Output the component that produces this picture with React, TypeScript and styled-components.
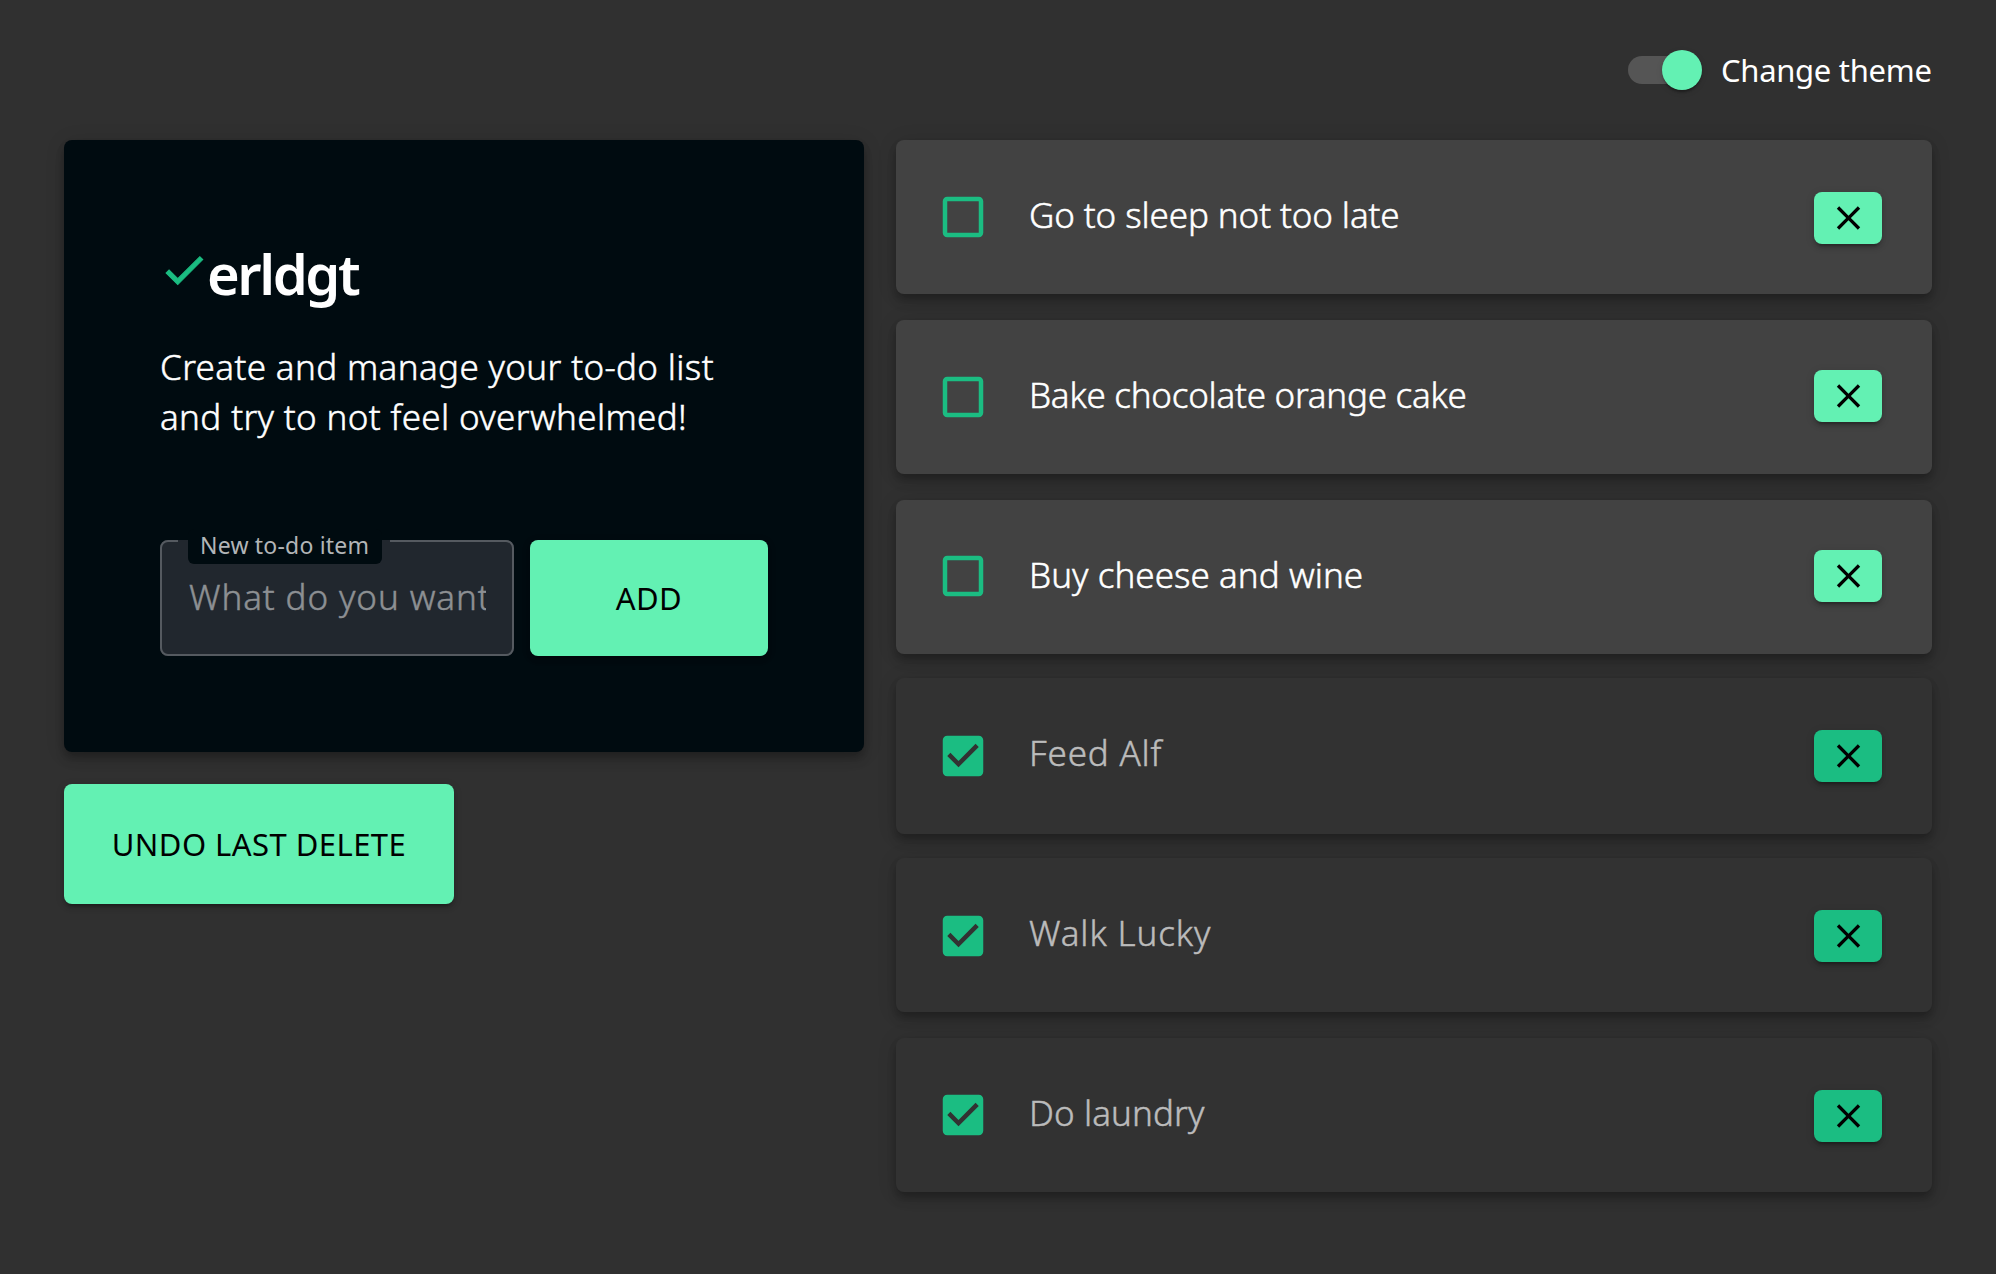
import React, { useState } from "react";
import styled, { createGlobalStyle, css } from "styled-components";

const colors = {
  page: "#303030",
  hero: "#000b10",
  paper: "#424242",
  paperDone: "#323232",
  mint: "#63f1b3",
  green: "#1bbd82",
};

const bodyFont = `"Noto Sans", "Open Sans", sans-serif`;

const elevation2 = css`
  box-shadow: 0 6px 2px -4px rgba(0, 0, 0, 0.2), 0 4px 4px 0 rgba(0, 0, 0, 0.14),
    0 2px 10px 0 rgba(0, 0, 0, 0.12);
`;

const elevation4 = css`
  box-shadow: 0 4px 8px -2px rgba(0, 0, 0, 0.2), 0 8px 10px 0 rgba(0, 0, 0, 0.14),
    0 2px 20px 0 rgba(0, 0, 0, 0.12);
`;

/* The light cut, thickened slightly so it sits between light and regular. */
const softLight = css`
  font-size: 35px;
  font-weight: 300;
  line-height: 50px;
  -webkit-text-stroke: 0.5px currentColor;
`;

const GlobalStyle = createGlobalStyle`
  *, *::before, *::after { box-sizing: border-box; }
  body {
    margin: 0;
    background: ${colors.page};
    color: #fff;
    font-family: ${bodyFont};
    -webkit-font-smoothing: antialiased;
  }
`;

const Page = styled.div`
  width: 1996px;
  min-height: 1274px;
  padding: 49px 64px 0;
`;

const Header = styled.header`
  display: flex;
  justify-content: flex-end;
  align-items: center;
  gap: 19px;
  height: 42px;
  margin-bottom: 49px;
`;

const SwitchTrack = styled.button<{ $on: boolean }>`
  display: flex;
  align-items: center;
  justify-content: ${(p) => (p.$on ? "flex-end" : "flex-start")};
  width: 68px;
  height: 28px;
  margin-right: 6px;
  padding: 0;
  border: 0;
  border-radius: 14px;
  background: #555;
`;

const SwitchThumb = styled.span`
  flex: none;
  width: 40px;
  height: 40px;
  margin-right: -6px;
  border-radius: 50%;
  background: ${colors.mint};
  box-shadow: 0 4px 2px -2px rgba(0, 0, 0, 0.2), 0 2px 2px 0 rgba(0, 0, 0, 0.14),
    0 2px 6px 0 rgba(0, 0, 0, 0.12);
`;

const SwitchLabel = styled.span`
  width: 211px;
  font-size: 31px;
  line-height: 42px;
  letter-spacing: -0.3px;
  white-space: nowrap;
`;

const Columns = styled.main`
  display: grid;
  grid-template-columns: 800px 1036px;
  column-gap: 32px;
  align-items: start;
`;

const Sidebar = styled.section`
  display: flex;
  flex-direction: column;
  align-items: flex-start;
  gap: 32px;
`;

const Hero = styled.div`
  width: 100%;
  height: 612px;
  padding: 96px;
  border-radius: 8px;
  background: ${colors.hero};
  ${elevation4}
`;

const Logo = styled.h1`
  display: flex;
  align-items: flex-start;
  height: 74px;
  margin: 0 0 32px;
  font-size: 56px;
  font-weight: 600;
  line-height: 74px;
  letter-spacing: -2.4px;
`;

const LogoCheck = styled.svg`
  flex: none;
  width: 50px;
  height: 50px;
  margin: 9px -2px 0 -1px;
  fill: ${colors.green};
  stroke: ${colors.green};
  stroke-width: 0.5;
`;

const Intro = styled.p`
  margin: 0 0 98px;
  ${softLight}
  letter-spacing: 0.36px;
  white-space: nowrap;
`;

const Form = styled.form`
  display: flex;
  gap: 16px;
  height: 116px;
`;

const Field = styled.div`
  position: relative;
  width: 354px;
  padding: 32px 26px 0 28px;
  border-radius: 8px;
  background: #21272e;
`;

const Outline = styled.fieldset`
  position: absolute;
  inset: -4px 0 0;
  min-width: 0;
  margin: 0;
  padding: 0 16px;
  border: 2px solid #555a60;
  border-radius: 8px;
  pointer-events: none;
`;

const Notch = styled.legend`
  width: 212px;
  height: 10px;
  padding: 0;
`;

const FieldLabel = styled.label`
  position: absolute;
  top: -11px;
  left: 28px;
  width: 194px;
  height: 35px;
  padding-left: 12px;
  border-radius: 6px;
  background: ${colors.hero};
  color: #b2b5b7;
  font-size: 23px;
  line-height: 32px;
  letter-spacing: 0.2px;
  white-space: nowrap;
`;

const TextInput = styled.input`
  display: block;
  width: 298px;
  height: 50px;
  padding: 0;
  border: 0;
  outline: 0;
  background: transparent;
  color: #fff;
  font-family: ${bodyFont};
  ${softLight}
  letter-spacing: 0.9px;
  text-indent: 1px;

  &::placeholder {
    color: #8d9093;
    opacity: 1;
  }
`;

const Button = styled.button<{ $width: number; $height: number }>`
  width: ${(p) => p.$width}px;
  height: ${(p) => p.$height}px;
  padding: 0;
  border: 0;
  border-radius: 8px;
  background: ${colors.mint};
  color: #000;
  font-family: ${bodyFont};
  font-size: 31px;
  letter-spacing: 0.45px;
  white-space: nowrap;
  ${elevation2}
`;

const List = styled.ul`
  display: flex;
  flex-direction: column;
  margin: 0;
  padding: 0;
  list-style: none;
`;

const Item = styled.li<{ $done: boolean; $height: number; $gap: number }>`
  display: flex;
  align-items: flex-start;
  height: ${(p) => p.$height}px;
  margin-bottom: ${(p) => p.$gap}px;
  padding: 0 50px 0 40px;
  border-radius: 8px;
  background: ${(p) => (p.$done ? colors.paperDone : colors.paper)};
  color: ${(p) => (p.$done ? "#bbb" : "#fff")};
  ${elevation4}
`;

const CheckboxIcon = styled.svg<{ $top: number }>`
  flex: none;
  width: 54px;
  height: 54px;
  margin-top: ${(p) => p.$top}px;
  fill: ${colors.green};
`;

const ItemText = styled.span<{ $tracking: number }>`
  flex: 1;
  margin: 50px 0 0 39px;
  ${softLight}
  letter-spacing: ${(p) => p.$tracking}px;
  white-space: nowrap;
`;

const DeleteButton = styled.button<{ $done: boolean; $top: number }>`
  display: flex;
  align-items: center;
  justify-content: flex-start;
  width: 68px;
  height: 52px;
  margin-top: ${(p) => p.$top}px;
  padding: 0 0 0 14px;
  border: 0;
  border-radius: 8px;
  background: ${(p) => (p.$done ? colors.green : colors.mint)};
  ${elevation2}

  svg {
    width: 41px;
    height: 40px;
    fill: #000;
  }
`;

const BOX_EMPTY =
  "M19 5v14H5V5h14m0-2H5c-1.1 0-2 .9-2 2v14c0 1.1.9 2 2 2h14c1.1 0 2-.9 2-2V5c0-1.1-.9-2-2-2z";
const BOX_CHECKED =
  "M19 3H5c-1.11 0-2 .9-2 2v14c0 1.1.89 2 2 2h14c1.11 0 2-.9 2-2V5c0-1.1-.89-2-2-2zm-9 14l-5-5 1.41-1.41L10 14.17l7.59-7.59L19 8l-9 9z";
const CROSS =
  "M19 6.41L17.59 5 12 10.59 6.41 5 5 6.41 10.59 12 5 17.59 6.41 19 12 13.41 17.59 19 19 17.59 13.41 12z";
const CHECK = "M9 16.17L4.83 12l-1.42 1.41L9 19 21 7l-1.41-1.41z";

type Todo = {
  text: string;
  done: boolean;
  height: number;
  gap: number;
  boxTop: number;
  deleteTop: number;
  tracking: number;
};

const todos: Todo[] = [
  { text: "Go to sleep not too late", done: false, height: 154, gap: 26, boxTop: 50, deleteTop: 52, tracking: -0.1 },
  { text: "Bake chocolate orange cake", done: false, height: 154, gap: 26, boxTop: 50, deleteTop: 50, tracking: -0.25 },
  { text: "Buy cheese and wine", done: false, height: 154, gap: 24, boxTop: 49, deleteTop: 50, tracking: 0.05 },
  { text: "Feed Alf", done: true, height: 156, gap: 24, boxTop: 51, deleteTop: 52, tracking: 0.8 },
  { text: "Walk Lucky", done: true, height: 154, gap: 26, boxTop: 51, deleteTop: 52, tracking: 0.9 },
  { text: "Do laundry", done: true, height: 154, gap: 0, boxTop: 50, deleteTop: 52, tracking: 0.1 },
];

export default function App() {
  const [on, setOn] = useState(true);
  return (
    <>
      <GlobalStyle />
      <Page>
        <Header>
          <SwitchTrack type="button" role="switch" aria-checked={on} $on={on} onClick={() => setOn(!on)}>
            <SwitchThumb />
          </SwitchTrack>
          <SwitchLabel>Change theme</SwitchLabel>
        </Header>
        <Columns>
          <Sidebar>
            <Hero>
              <Logo>
                <LogoCheck viewBox="0 0 24 24">
                  <path d={CHECK} />
                </LogoCheck>
                erldgt
              </Logo>
              <Intro>
                Create and manage your to-do list
                <br />
                and try to not feel overwhelmed!
              </Intro>
              <Form onSubmit={(e) => e.preventDefault()}>
                <Field>
                  <Outline aria-hidden="true">
                    <Notch />
                  </Outline>
                  <FieldLabel htmlFor="new-todo">New to-do item</FieldLabel>
                  <TextInput id="new-todo" placeholder="What do you want to do?" />
                </Field>
                <Button $width={238} $height={116}>ADD</Button>
              </Form>
            </Hero>
            <Button type="button" $width={390} $height={120}>UNDO LAST DELETE</Button>
          </Sidebar>
          <List>
            {todos.map((t) => (
              <Item key={t.text} $done={t.done} $height={t.height} $gap={t.gap}>
                <CheckboxIcon $top={t.boxTop} viewBox="0 0 24 24">
                  <path d={t.done ? BOX_CHECKED : BOX_EMPTY} />
                </CheckboxIcon>
                <ItemText $tracking={t.tracking}>{t.text}</ItemText>
                <DeleteButton type="button" $done={t.done} $top={t.deleteTop}>
                  <svg viewBox="0 0 24 24">
                    <path d={CROSS} />
                  </svg>
                </DeleteButton>
              </Item>
            ))}
          </List>
        </Columns>
      </Page>
    </>
  );
}
